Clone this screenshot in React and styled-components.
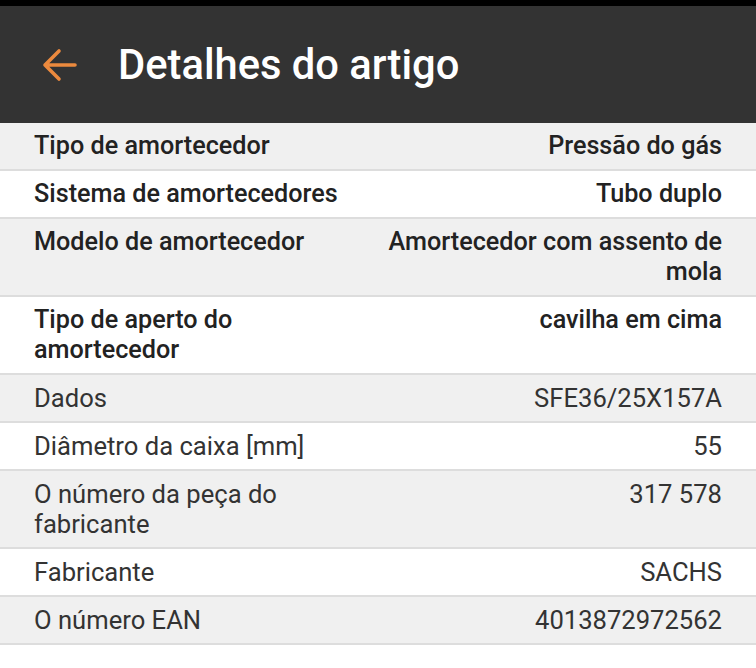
import React from "react"
import styled, { createGlobalStyle } from "styled-components"

const GlobalStyle = createGlobalStyle`
  body {
    margin: 0;
    background: #fff;
    font-family: Roboto, "Noto Sans", sans-serif;
  }
`

const details = [
  { label: "Tipo de amortecedor", value: "Pressão do gás", strong: true },
  { label: "Sistema de amortecedores", value: "Tubo duplo", strong: true },
  { label: "Modelo de amortecedor", value: "Amortecedor com assento de mola", strong: true },
  { label: "Tipo de aperto do amortecedor", value: "cavilha em cima", strong: true },
  { label: "Dados", value: "SFE36/25X157A" },
  { label: "Diâmetro da caixa [mm]", value: "55" },
  { label: "O número da peça do fabricante", value: "317 578" },
  { label: "Fabricante", value: "SACHS" },
  { label: "O número EAN", value: "4013872972562" },
]

const Page = styled.div`
  width: 756px;
  min-height: 668px;
  background: #fff;
`

const StatusBar = styled.div`
  height: 6px;
  background: #000;
`

const Header = styled.header`
  height: 117px;
  background: #333333;
  display: flex;
  align-items: center;
  padding-left: 40px;
  gap: 40px;
`

const BackButton = styled.button`
  border: 0;
  background: transparent;
  padding: 0;
  display: flex;
  cursor: pointer;
`

const Title = styled.h1`
  margin: 0;
  color: #fff;
  font-size: 41.7px;
  font-weight: 500;
`

const List = styled.div`
  display: flex;
  flex-direction: column;
`

const Row = styled.div`
  display: grid;
  grid-template-columns: 1fr 1fr;
  padding: 8px 34px;
  background: ${p => (p.$shade ? "#f0f0f0" : "#fff")};
  border-bottom: 2px solid #dddddd;
  font-size: ${p => (p.$strong ? "25.2px" : "25.6px")};
  font-weight: ${p => (p.$strong ? 500 : 400)};
  color: ${p => (p.$strong ? "#222" : "#333")};
  line-height: 30px;
`

const Label = styled.div`
  text-align: left;
`

const Value = styled.div`
  text-align: right;
`

const BackArrow = () => (
  <svg width="38" height="36" viewBox="0 0 38 36" fill="none">
    <path
      d="M35 18H5M19 4L5 18l14 14"
      stroke="#ec8a3e"
      strokeWidth="3.6"
      strokeLinecap="round"
      strokeLinejoin="round"
    />
  </svg>
)

export default function App() {
  return (
    <Page>
      <GlobalStyle />
      <StatusBar />
      <Header>
        <BackButton aria-label="Voltar">
          <BackArrow />
        </BackButton>
        <Title>Detalhes do artigo</Title>
      </Header>
      <List>
        {details.map((item, index) => (
          <Row key={index} $shade={index % 2 === 0} $strong={item.strong}>
            <Label>{item.label}</Label>
            <Value>{item.value}</Value>
          </Row>
        ))}
      </List>
    </Page>
  )
}
